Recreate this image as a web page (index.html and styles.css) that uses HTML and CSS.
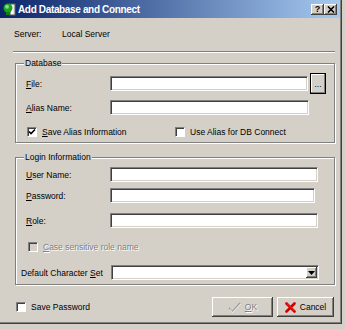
FILE: index.html
```html
<!DOCTYPE html>
<html lang="en">
<head>
    <meta charset="UTF-8">
    <title>Add Database and Connect</title>
    <link rel="stylesheet" href="styles.css">
</head>
<body>
<div class="window">
    <div class="titlebar">
        <svg class="app-icon" width="13" height="14" viewBox="0 0 13 14">
            <rect x="7" y="2" width="5" height="11" fill="#e8e8e8" stroke="#606060" stroke-width="1"/>
            <rect x="8" y="3" width="2" height="9" fill="#ffffff"/>
            <circle cx="5" cy="6" r="4.5" fill="#1fa01f"/>
            <circle cx="4" cy="4.8" r="2" fill="#7fe07f"/>
            <rect x="3" y="10" width="4" height="3" fill="#108010"/>
        </svg>
        <span class="title">Add Database and Connect</span>
        <div class="caption-buttons">
            <span class="caption-btn">?</span>
            <span class="caption-btn">
                <svg width="8" height="7" viewBox="0 0 8 7"><path d="M1 0.5 L7 6.5 M7 0.5 L1 6.5" stroke="#000" stroke-width="1.6"/></svg>
            </span>
        </div>
    </div>

    <div class="dialog">
        <div class="server-row">
            <span class="server-label">Server:</span>
            <span>Local Server</span>
        </div>
        <div class="separator"></div>

        <div class="group group-db">
            <span class="group-title">Database</span>
            <div class="field-row file-row">
                <span class="field-label"><u>F</u>ile:</span>
                <span class="edit edit-file"></span>
                <span class="browse-btn">...</span>
            </div>
            <div class="field-row alias-row">
                <span class="field-label"><u>A</u>lias Name:</span>
                <span class="edit edit-alias"></span>
            </div>
            <div class="check-row">
                <span class="check">
                    <span class="box">
                        <svg width="8" height="8" viewBox="0 0 8 8"><path d="M1 3.5 L3 5.5 L7 1.5" fill="none" stroke="#000" stroke-width="1.6"/></svg>
                    </span>
                    <span><u>S</u>ave Alias Information</span>
                </span>
                <span class="check">
                    <span class="box"></span>
                    <span>Use Alias for DB Connect</span>
                </span>
            </div>
        </div>

        <div class="group group-login">
            <span class="group-title">Login Information</span>
            <div class="field-row user-row">
                <span class="field-label"><u>U</u>ser Name:</span>
                <span class="edit edit-login"></span>
            </div>
            <div class="field-row pass-row">
                <span class="field-label"><u>P</u>assword:</span>
                <span class="edit edit-pass"></span>
            </div>
            <div class="field-row role-row">
                <span class="field-label"><u>R</u>ole:</span>
                <span class="edit edit-login"></span>
            </div>
            <div class="check-row case-row">
                <span class="check disabled">
                    <span class="box"></span>
                    <span><u>C</u>ase sensitive role name</span>
                </span>
            </div>
            <div class="field-row charset-row">
                <span class="charset-label">Default Character <u>S</u>et</span>
                <span class="edit combo">
                    <span class="combo-btn">
                        <svg width="7" height="4" viewBox="0 0 7 4"><path d="M0 0 H7 L3.5 4 Z" fill="#000"/></svg>
                    </span>
                </span>
            </div>
        </div>

        <div class="footer">
            <span class="check save-pass">
                <span class="box"></span>
                <span>Save Password</span>
            </span>
            <span class="button ok-btn">
                <svg width="13" height="11" viewBox="0 0 13 11"><path d="M1 6 L4.5 9.5 L12 1" fill="none" stroke="#9a9a9a" stroke-width="1.4"/><path d="M2 7 L4.5 10.5 L12.5 2" fill="none" stroke="#fff" stroke-width="0.8"/></svg>
                <span><u>O</u>K</span>
            </span>
            <span class="button cancel-btn">
                <svg width="11" height="11" viewBox="0 0 11 11"><path d="M1.5 1.5 L9.5 9.5 M9.5 1.5 L1.5 9.5" stroke="#d00000" stroke-width="2.6" stroke-linecap="round"/><path d="M2 1.5 L9.5 9" stroke="#ff4040" stroke-width="0.8"/></svg>
                <span>Cancel</span>
            </span>
        </div>
    </div>
</div>
</body>
</html>
```

FILE: styles.css
```css
body {
    margin: 0;
    background-color: #d4d0c8;
    font-family: "Liberation Sans", Arial, sans-serif;
    font-size: 8.5px;
    color: #000;
}

.window {
    width: 341px;
    height: 323px;
    border-right: 1px solid #404040;
    border-bottom: 1px solid #404040;
    box-shadow: inset -1px -1px 0 #808080;
}

/* caption */
.titlebar {
    display: flex;
    align-items: center;
    height: 18px;
    width: 340px;
    background: linear-gradient(to right, #0a246a, #a6caf0);
}

.app-icon {
    margin-left: 3px;
    flex: none;
}

.title {
    margin-left: 2px;
    color: #fff;
    font-weight: bold;
    font-size: 10px;
    letter-spacing: -0.35px;
}

.caption-buttons {
    display: flex;
    margin-left: auto;
    margin-right: 3px;
}

.caption-btn {
    display: flex;
    align-items: center;
    justify-content: center;
    width: 13px;
    height: 11px;
    background-color: #d4d0c8;
    font-weight: bold;
    font-size: 9px;
    box-shadow: inset -1px -1px 0 #404040, inset 1px 1px 0 #fff, inset -2px -2px 0 #808080;
}

/* dialog body */
.dialog {
    width: 340px;
}

.server-row {
    display: flex;
    height: 10px;
    line-height: 10px;
    margin-top: 11px;
    padding-left: 14px;
}

.server-label {
    width: 48px;
}

.separator {
    margin: 12px 0 0 13px;
    width: 322px;
    border-top: 1px solid #808080;
    border-bottom: 1px solid #fff;
}

.group {
    box-sizing: border-box;
    width: 320px;
    margin-left: 15px;
    padding-left: 10px;
    border: 1px solid #808080;
    box-shadow: 1px 1px 0 #fff, inset 1px 1px 0 #fff;
}

.group-db {
    margin-top: 10px;
    height: 80px;
}

.group-login {
    margin-top: 14px;
    height: 128px;
}

.group-title {
    display: block;
    width: max-content;
    margin: -6px 0 0 -2px;
    padding: 0 1px;
    line-height: 10px;
    background-color: #d4d0c8;
}

.field-row {
    display: flex;
    align-items: center;
}

.field-label {
    width: 84px;
    flex: none;
}

.edit {
    box-sizing: border-box;
    display: block;
    height: 15px;
    background-color: #fff;
    border: 1px solid;
    border-color: #808080 #fff #fff #808080;
    box-shadow: inset 1px 1px 0 #404040, inset -1px -1px 0 #d4d0c8;
}

.file-row {
    margin-top: 5px;
    height: 21px;
}

.edit-file {
    width: 198px;
}

.browse-btn {
    box-sizing: border-box;
    display: flex;
    align-items: flex-end;
    justify-content: center;
    width: 16px;
    height: 21px;
    margin-left: 2px;
    padding-bottom: 5px;
    line-height: 8px;
    border: 1px solid #000;
    box-shadow: inset -1px -1px 0 #808080, inset 1px 1px 0 #fff;
}

.alias-row {
    margin-top: 6px;
}

.edit-alias {
    width: 199px;
}

.check-row {
    display: grid;
    grid-template-columns: 148px auto;
    margin-top: 12px;
    padding-left: 1px;
}

.check {
    display: flex;
    align-items: center;
    line-height: 10px;
}

.box {
    box-sizing: border-box;
    display: flex;
    align-items: center;
    justify-content: center;
    width: 10px;
    height: 10px;
    margin-right: 5px;
    background-color: #fff;
    border: 1px solid;
    border-color: #808080 #fff #fff #808080;
    box-shadow: inset 1px 1px 0 #404040;
}

.user-row {
    margin-top: 5px;
}

.edit-login {
    width: 208px;
}

.edit-pass {
    width: 205px;
}

.pass-row {
    margin-top: 6px;
}

.role-row {
    margin-top: 10px;
}

.case-row {
    margin-top: 14px;
    padding-left: 2px;
}

.disabled {
    color: #808080;
    text-shadow: 1px 1px 0 #fff;
}

.disabled .box {
    background-color: #d4d0c8;
}

.charset-row {
    margin-top: 13px;
    margin-left: -5px;
}

.charset-label {
    width: 90px;
    flex: none;
}

.combo {
    display: flex;
    justify-content: flex-end;
    align-items: center;
    width: 208px;
    padding-right: 1px;
}

.combo-btn {
    display: flex;
    align-items: center;
    justify-content: center;
    width: 11px;
    height: 11px;
    background-color: #d4d0c8;
    box-shadow: inset -1px -1px 0 #404040, inset 1px 1px 0 #fff, inset -2px -2px 0 #808080;
}

/* bottom buttons */
.footer {
    display: flex;
    align-items: center;
    height: 20px;
    margin-top: 12px;
    padding: 0 6px 0 16px;
}

.save-pass {
    margin-right: auto;
}

.button {
    box-sizing: border-box;
    display: flex;
    align-items: center;
    justify-content: center;
    gap: 4px;
    height: 20px;
    box-shadow: inset -1px -1px 0 #404040, inset 1px 1px 0 #fff, inset -2px -2px 0 #808080;
}

.ok-btn {
    width: 61px;
    color: #808080;
    text-shadow: 1px 1px 0 #fff;
}

.cancel-btn {
    width: 57px;
    margin-left: 4px;
}
```
